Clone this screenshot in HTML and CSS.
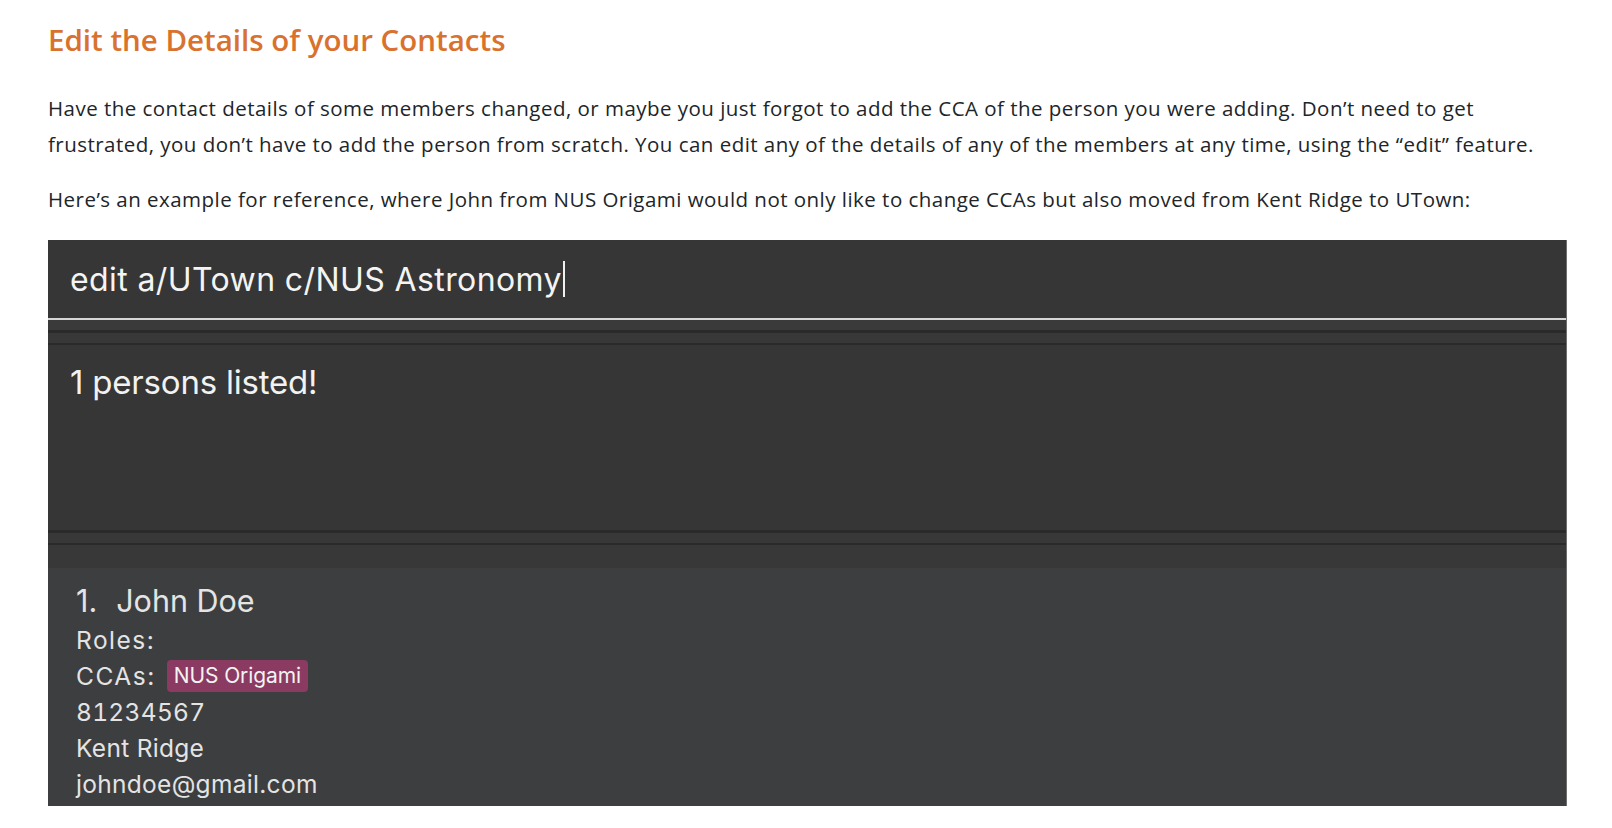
FILE: index.html
```html
<!DOCTYPE html>
<html lang="en">
<head>
<meta charset="utf-8">
<title>Edit the Details of your Contacts</title>
<link rel="stylesheet" href="styles.css">
</head>
<body>
<main class="doc">
  <h2 class="title">Edit the Details of your Contacts</h2>
  <p class="para">Have the contact details of some members changed, or maybe you just forgot to add the CCA of the person you were adding. Don’t need to get<br>frustrated, you don’t have to add the person from scratch. You can edit any of the details of any of the members at any time, using the “edit” feature.</p>
  <p class="para">Here’s an example for reference, where John from NUS Origami would not only like to change CCAs but also moved from Kent Ridge to UTown:</p>
  <div class="app">
    <div class="command"><span class="command-text">edit a/UTown c/NUS Astronomy</span><span class="caret"></span></div>
    <div class="command-underline"></div>
    <div class="split">
      <div class="band band-a"></div>
      <div class="rule rule-3"></div>
      <div class="band band-b"></div>
      <div class="rule rule-2"></div>
    </div>
    <div class="result">1 persons listed!</div>
    <div class="split">
      <div class="rule rule-3"></div>
      <div class="band band-b"></div>
      <div class="rule rule-2"></div>
      <div class="band band-c"></div>
    </div>
    <div class="list">
      <div class="card">
        <div class="name"><span class="index">1.</span>John Doe</div>
        <div class="row"><span class="label">Roles:</span></div>
        <div class="row"><span class="label">CCAs:</span><span class="tag">NUS Origami</span></div>
        <div class="row row-num">81234567</div>
        <div class="row">Kent Ridge</div>
        <div class="row">johndoe@gmail.com</div>
      </div>
    </div>
  </div>
</main>
</body>
</html>
```
FILE: styles.css
```css
html, body {
  margin: 0;
  padding: 0;
  background: #ffffff;
}

.doc {
  padding: 22px 45px 0 48px;
  font-family: "Open Sans", "Noto Sans", sans-serif;
  color: #212529;
}

.title {
  margin: 0 0 32px;
  font-size: 29.5px;
  line-height: 36px;
  font-weight: 600;
  color: #d8722e;
}

.para {
  margin: 0 0 19px;
  font-size: 20.5px;
  line-height: 36px;
  letter-spacing: 0.47px;
  white-space: nowrap;
}

.para + .para {
  margin-bottom: 23px;
}

.app {
  width: 1518px;
  border-right: 1px solid #6e6e6e;
  background: #363636;
  font-family: Inter, Roboto, sans-serif;
  display: flex;
  flex-direction: column;
}

.command {
  height: 78px;
  padding-left: 22px;
  display: flex;
  align-items: center;
  background: #363636;
  color: #f4f4f4;
  font-size: 32px;
  letter-spacing: 0.4px;
}

.caret {
  width: 2px;
  height: 36px;
  margin-left: 1px;
  background: #f0f0f0;
}

.command-underline {
  height: 2px;
  background: #d6d6d6;
}

.split {
  display: flex;
  flex-direction: column;
}

.band { background: #383838; }
.band-a { height: 10px; background: #3a3a3a; }
.band-b { height: 10px; }
.band-c { height: 23px; }

.rule { background: #2a2a2a; }
.rule-3 { height: 3px; }
.rule-2 { height: 2px; }

.result {
  height: 185px;
  box-sizing: border-box;
  padding: 14px 0 0 22px;
  background: #363636;
  color: #f2f2f2;
  font-size: 33px;
  line-height: 46px;
  letter-spacing: -0.2px;
}

.list {
  height: 238px;
  background: #3d3e40;
}

.card {
  padding: 12px 0 0 28px;
  color: #e4e4e4;
  font-size: 24.5px;
  line-height: 36px;
  letter-spacing: 0.3px;
}

.name {
  font-size: 30.5px;
  line-height: 42px;
  letter-spacing: 0;
}

.index {
  margin-right: 19px;
}

.row {
  display: flex;
  align-items: center;
  height: 36px;
  white-space: pre;
}

.label {
  letter-spacing: 1.5px;
}

.row-num {
  font-variant-numeric: tabular-nums;
}

.tag {
  height: 32px;
  margin-left: 11px;
  padding: 0 7px;
  display: inline-flex;
  align-items: center;
  border-radius: 4px;
  background: #8b3a62;
  color: #f3f3f3;
  font-size: 21px;
  letter-spacing: -0.1px;
}
```
